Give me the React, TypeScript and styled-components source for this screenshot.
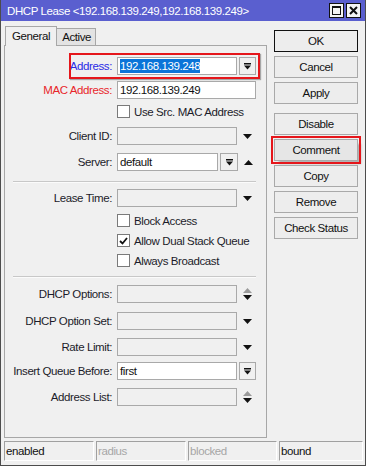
import React from "react";
import styled, { createGlobalStyle } from "styled-components";

const Global = createGlobalStyle`
  html, body { margin: 0; padding: 0; background: #f0f0f0; }
  body {
    font-family: "Liberation Sans", Arial, sans-serif;
    font-size: 11.5px;
    letter-spacing: -0.4px;
    color: #111;
  }
  * { box-sizing: border-box; }
`;

const Window = styled.div`
  width: 366px;
  height: 466px;
  background: #f0f0f0;
  border-left: 1px solid #4c4c4c;
  border-right: 1px solid #4c4c4c;
  border-bottom: 1px solid #4c4c4c;
  display: flex;
  flex-direction: column;
`;

const TitleBar = styled.div`
  height: 21px;
  flex: none;
  background: #5a5fcf;
  display: flex;
  align-items: center;
  padding: 0 4px 0 6px;
`;

const TitleText = styled.div`
  flex: 1;
  color: #fff;
  white-space: nowrap;
`;

const TitleButtons = styled.div`
  display: flex;
  gap: 2px;
`;

const TitleBtn = styled.div`
  width: 15px;
  height: 15px;
  background: #f4f4f4;
  border: 1px solid #111;
  display: flex;
  align-items: center;
  justify-content: center;
`;

const Main = styled.div`
  height: 417px;
  flex: none;
  display: flex;
  padding: 5px 0 0 3px;
  gap: 7px;
`;

const LeftPane = styled.div`
  width: 263px;
  display: flex;
  flex-direction: column;
`;

const TabRow = styled.div`
  height: 19px;
  display: flex;
  align-items: flex-end;
  padding-left: 1px;
`;

const Tab = styled.div<{ $active?: boolean }>`
  position: relative;
  z-index: 1;
  height: ${(p) => (p.$active ? 20 : 17)}px;
  margin-bottom: ${(p) => (p.$active ? -1 : 0)}px;
  padding: ${(p) => (p.$active ? "3px 6px 0 6px" : "2px 4px 0 5px")};
  background: ${(p) => (p.$active ? "#f0f0f0" : "#e3e3e3")};
  border: 1px solid #a7a7a7;
  border-bottom: none;
  border-left: ${(p) => (p.$active ? "1px solid #a7a7a7" : "none")};
  color: #111;
`;

const Panel = styled.div`
  height: 393px;
  border: 1px solid #a7a7a7;
  display: flex;
  flex-direction: column;
`;

const Row = styled.div<{ $mt: number }>`
  position: relative;
  height: 18px;
  margin-top: ${(p) => p.$mt}px;
  display: flex;
  align-items: center;
  flex: none;
`;

const Label = styled.div<{ $color?: string }>`
  width: 107px;
  margin-right: 5px;
  text-align: right;
  color: ${(p) => p.$color || "#1c1c2a"};
  white-space: nowrap;
`;

const Field = styled.div<{ $w: number; $editable?: boolean }>`
  width: ${(p) => p.$w}px;
  height: 18px;
  border: 1px solid #a9a9a9;
  background: ${(p) => (p.$editable ? "#fff" : "#f0f0f0")};
  display: flex;
  align-items: center;
  padding-left: 2px;
  white-space: nowrap;
  color: #111;
`;

const Selected = styled.span`
  background: #0a74d8;
  color: #fff;
  line-height: 14px;
`;

const DropBtn = styled.div<{ $w: number }>`
  width: ${(p) => p.$w}px;
  height: 18px;
  margin-left: 2px;
  border: 1px solid #a9a9a9;
  background: #f0f0f0;
  display: flex;
  align-items: center;
  justify-content: center;
`;

const SideIcon = styled.div`
  margin-left: 6px;
  width: 9px;
  display: flex;
  flex-direction: column;
  align-items: center;
  gap: 2px;
`;

const CheckRow = styled.div<{ $mt: number }>`
  height: 13px;
  margin-top: ${(p) => p.$mt}px;
  padding-left: 112px;
  display: flex;
  align-items: center;
  gap: 4px;
  flex: none;
`;

const Box = styled.div`
  width: 13px;
  height: 13px;
  border: 1px solid #7a7a7a;
  background: #fff;
  display: flex;
  align-items: center;
  justify-content: center;
`;

const CheckText = styled.span`
  color: #1c1c2a;
  white-space: nowrap;
`;

const Separator = styled.div<{ $mt: number }>`
  margin: ${(p) => p.$mt}px 0 0 8px;
  width: 243px;
  height: 2px;
  border-top: 1px solid #c8c8c8;
  border-bottom: 1px solid #fbfbfb;
  flex: none;
`;

const Highlight = styled.div`
  position: absolute;
  left: 64px;
  top: -4px;
  width: 191px;
  height: 26px;
  border: 2px solid #e5161b;
  box-shadow: 1px 1px 1px rgba(0, 0, 0, 0.3);
  pointer-events: none;
`;

const ButtonCol = styled.div`
  width: 84px;
  padding-top: 4px;
  display: flex;
  flex-direction: column;
`;

const Btn = styled.div<{ $primary?: boolean; $mt: number; $marked?: boolean }>`
  height: 22px;
  margin-top: ${(p) => p.$mt}px;
  border: 1px solid ${(p) => (p.$primary ? "#111" : "#a9a9a9")};
  background: ${(p) => (p.$marked ? "#e6e6e6" : "#ededed")};
  display: flex;
  align-items: center;
  justify-content: center;
  color: #111;
  white-space: nowrap;
  outline: ${(p) => (p.$marked ? "2px solid #e5161b" : "none")};
  outline-offset: 1px;
  box-shadow: ${(p) => (p.$marked ? "4px 4px 2px -1px rgba(0,0,0,0.25)" : "none")};
`;

const StatusBar = styled.div`
  margin: 3px 0 0 3px;
  height: 20px;
  display: grid;
  grid-template-columns: 90px 90px 89px 84px;
  gap: 2px;
`;

const StatusCell = styled.div<{ $muted?: boolean }>`
  border-top: 1px solid #a0a0a0;
  border-left: 1px solid #a0a0a0;
  border-right: 1px solid #fff;
  border-bottom: 1px solid #fff;
  padding-left: 1px;
  display: flex;
  align-items: center;
  color: ${(p) => (p.$muted ? "#a6a6a6" : "#111")};
`;

const Down = ({ color = "#111" }: { color?: string }) => (
  <svg width="9" height="5" viewBox="0 0 9 5">
    <polygon points="0,0 9,0 4.5,5" fill={color} />
  </svg>
);

const Up = ({ color = "#111" }: { color?: string }) => (
  <svg width="9" height="5" viewBox="0 0 9 5">
    <polygon points="0,5 9,5 4.5,0" fill={color} />
  </svg>
);

const DropIcon = () => (
  <svg width="7" height="7" viewBox="0 0 7 7">
    <rect x="0" y="0" width="7" height="1.5" fill="#111" />
    <polygon points="0,2.5 7,2.5 3.5,6.5" fill="#111" />
  </svg>
);

const Check = () => (
  <svg width="9" height="8" viewBox="0 0 9 8">
    <path d="M1 4 L3.5 6.5 L8 1" stroke="#111" strokeWidth="1.8" fill="none" />
  </svg>
);

const MaxIcon = () => (
  <svg width="9" height="9" viewBox="0 0 9 9">
    <rect x="0.5" y="0.5" width="8" height="8" fill="none" stroke="#111" strokeWidth="1" />
    <rect x="0" y="0" width="9" height="2" fill="#111" />
  </svg>
);

const CloseIcon = () => (
  <svg width="9" height="9" viewBox="0 0 9 9">
    <path d="M1 1 L8 8 M8 1 L1 8" stroke="#111" strokeWidth="2" />
  </svg>
);

export default function App() {
  return (
    <>
      <Global />
      <Window>
        <TitleBar>
          <TitleText>DHCP Lease &lt;192.168.139.249,192.168.139.249&gt;</TitleText>
          <TitleButtons>
            <TitleBtn>
              <MaxIcon />
            </TitleBtn>
            <TitleBtn>
              <CloseIcon />
            </TitleBtn>
          </TitleButtons>
        </TitleBar>
        <Main>
          <LeftPane>
            <TabRow>
              <Tab $active>General</Tab>
              <Tab>Active</Tab>
            </TabRow>
            <Panel>
              <Row $mt={11}>
                <Label $color="#2a2ae6">Address:</Label>
                <Field $w={120} $editable>
                  <Selected>192.168.139.248</Selected>
                </Field>
                <DropBtn $w={17}>
                  <DropIcon />
                </DropBtn>
                <Highlight />
              </Row>
              <Row $mt={6}>
                <Label $color="#e8262a">MAC Address:</Label>
                <Field $w={139} $editable>192.168.139.249</Field>
              </Row>
              <CheckRow $mt={6}>
                <Box />
                <CheckText>Use Src. MAC Address</CheckText>
              </CheckRow>
              <Row $mt={9}>
                <Label>Client ID:</Label>
                <Field $w={120} />
                <SideIcon>
                  <Down />
                </SideIcon>
              </Row>
              <Row $mt={8}>
                <Label>Server:</Label>
                <Field $w={101} $editable>default</Field>
                <DropBtn $w={18}>
                  <DropIcon />
                </DropBtn>
                <SideIcon>
                  <Up />
                </SideIcon>
              </Row>
              <Separator $mt={10} />
              <Row $mt={6}>
                <Label>Lease Time:</Label>
                <Field $w={120} />
                <SideIcon>
                  <Down />
                </SideIcon>
              </Row>
              <CheckRow $mt={7}>
                <Box />
                <CheckText>Block Access</CheckText>
              </CheckRow>
              <CheckRow $mt={7}>
                <Box>
                  <Check />
                </Box>
                <CheckText>Allow Dual Stack Queue</CheckText>
              </CheckRow>
              <CheckRow $mt={7}>
                <Box />
                <CheckText>Always Broadcast</CheckText>
              </CheckRow>
              <Separator $mt={9} />
              <Row $mt={7}>
                <Label>DHCP Options:</Label>
                <Field $w={120} />
                <SideIcon>
                  <Up color="#9a9a9a" />
                  <Down />
                </SideIcon>
              </Row>
              <Row $mt={9}>
                <Label>DHCP Option Set:</Label>
                <Field $w={120} />
                <SideIcon>
                  <Down />
                </SideIcon>
              </Row>
              <Row $mt={8}>
                <Label>Rate Limit:</Label>
                <Field $w={120} />
                <SideIcon>
                  <Down />
                </SideIcon>
              </Row>
              <Row $mt={6}>
                <Label>Insert Queue Before:</Label>
                <Field $w={120} $editable>first</Field>
                <DropBtn $w={17}>
                  <DropIcon />
                </DropBtn>
              </Row>
              <Row $mt={8}>
                <Label>Address List:</Label>
                <Field $w={120} />
                <SideIcon>
                  <Up color="#9a9a9a" />
                  <Down />
                </SideIcon>
              </Row>
            </Panel>
          </LeftPane>
          <ButtonCol>
            <Btn $primary $mt={0}>OK</Btn>
            <Btn $mt={4}>Cancel</Btn>
            <Btn $mt={4}>Apply</Btn>
            <Btn $mt={9}>Disable</Btn>
            <Btn $mt={4} $marked>Comment</Btn>
            <Btn $mt={4}>Copy</Btn>
            <Btn $mt={4}>Remove</Btn>
            <Btn $mt={4}>Check Status</Btn>
          </ButtonCol>
        </Main>
        <StatusBar>
          <StatusCell>enabled</StatusCell>
          <StatusCell $muted>radius</StatusCell>
          <StatusCell $muted>blocked</StatusCell>
          <StatusCell>bound</StatusCell>
        </StatusBar>
      </Window>
    </>
  );
}
